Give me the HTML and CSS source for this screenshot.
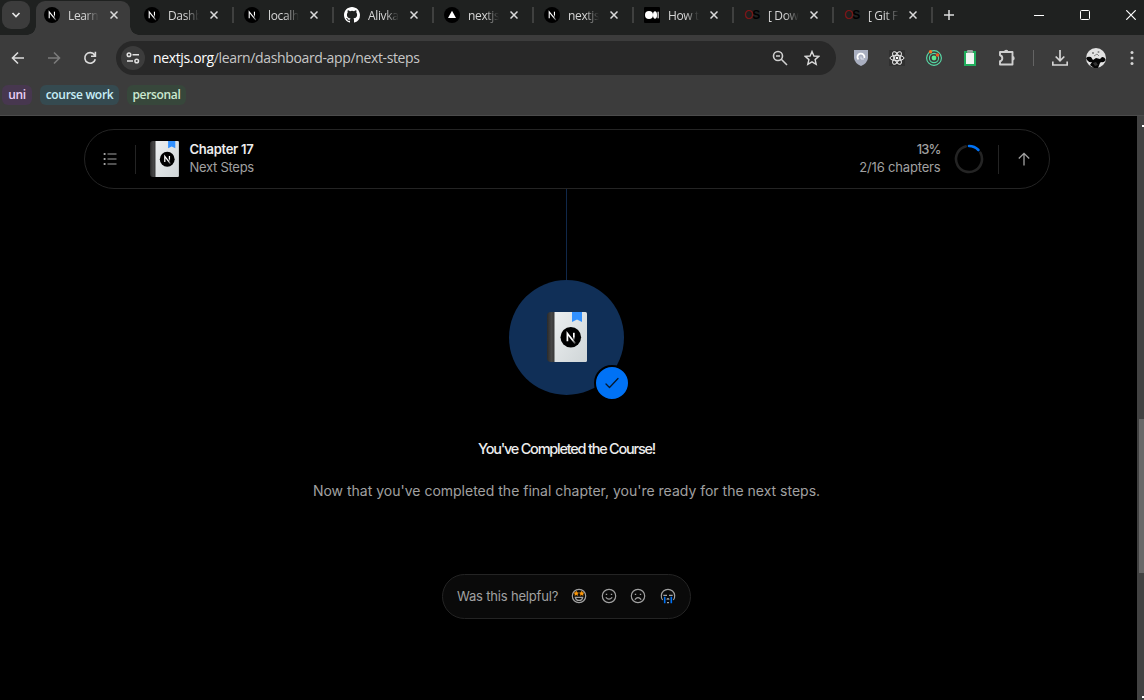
FILE: index.html
```html
<!DOCTYPE html>
<html lang="en">
<head>
<meta charset="utf-8">
<title>Next Steps</title>
<link rel="stylesheet" href="styles.css">
</head>
<body>
<svg class="defs" width="0" height="0">
  <defs>
    <linearGradient id="stem" x1="0" y1="0" x2="0" y2="1"><stop offset=".5" stop-color="#fff"/><stop offset="1" stop-color="#fff" stop-opacity="0"/></linearGradient>
    <linearGradient id="slash" x1="0" y1="0" x2="1" y2="1"><stop offset=".6" stop-color="#fff"/><stop offset="1" stop-color="#fff" stop-opacity=".2"/></linearGradient>
    <linearGradient id="paper" x1="0" y1="0" x2="1" y2="1"><stop offset="0" stop-color="#eceff0"/><stop offset="1" stop-color="#cfd5d7"/></linearGradient>
    <linearGradient id="spine" x1="0" y1="0" x2="1" y2="0"><stop offset="0" stop-color="#2a2a2a"/><stop offset=".5" stop-color="#464646"/><stop offset="1" stop-color="#303030"/></linearGradient>
    <symbol id="next" viewBox="0 0 16 16">
      <circle cx="8" cy="8" r="8" fill="#000"/>
      <path d="M5.2 11.2V4.9L11.9 13.2" fill="none" stroke="url(#slash)" stroke-width="1.1"/>
      <rect x="9.9" y="4.7" width="1.1" height="5.6" fill="url(#stem)"/>
    </symbol>
    <symbol id="close" viewBox="0 0 8 8"><path d="M.5.5l7 7M7.5.5l-7 7" fill="none" stroke="#dadada" stroke-width="1.5"/></symbol>
    <symbol id="github" viewBox="0 0 16 16"><path fill="#fff" d="M8 0C3.58 0 0 3.58 0 8c0 3.54 2.29 6.53 5.47 7.59.4.07.55-.17.55-.38 0-.19-.01-.82-.01-1.49-2.01.37-2.53-.49-2.69-.94-.09-.23-.48-.94-.82-1.13-.28-.15-.68-.52-.01-.53.63-.01 1.08.58 1.23.82.72 1.21 1.87.87 2.33.66.07-.52.28-.87.51-1.07-1.78-.2-3.64-.89-3.64-3.95 0-.87.31-1.59.82-2.15-.08-.2-.36-1.02.08-2.12 0 0 .67-.21 2.2.82a7.6 7.6 0 0 1 4 0c1.53-1.04 2.2-.82 2.2-.82.44 1.1.16 1.92.08 2.12.51.56.82 1.27.82 2.15 0 3.07-1.87 3.75-3.65 3.95.29.25.54.73.54 1.48 0 1.07-.01 1.93-.01 2.2 0 .21.15.46.55.38A8.01 8.01 0 0 0 16 8c0-4.42-3.58-8-8-8z"/></symbol>
    <symbol id="book" viewBox="0 0 40 50">
      <path d="M4 0H9V50H4Q0 50 0 46V4Q0 0 4 0Z" fill="url(#spine)"/>
      <path d="M7.5 0H38.500Q40 0 40 1.500V48.500Q40 50 38.500 50H7.500Z" fill="url(#paper)"/>
      <path d="M25 0H35V10L30 7.500L25 10Z" fill="#3291ff"/>
      <circle cx="23.800" cy="25.300" r="10.300" fill="#000"/>
      <path d="M20.400 29.200V21.400L28.300 31.600" fill="none" stroke="url(#slash)" stroke-width="1.700"/>
      <rect x="26" y="20.800" width="1.700" height="7.500" fill="url(#stem)"/>
    </symbol>
  </defs>
</svg>

<header class="tabstrip">
  <div class="tab-search"><svg width="10" height="6" viewBox="0 0 10 6"><path d="M1.500 1L5 4.500L8.500 1" fill="none" stroke="#e6e6e6" stroke-width="1.700"/></svg></div>
  <div class="tab active"><svg class="fav"><use href="#next"/></svg><span class="title">Learn</span><svg class="x"><use href="#close"/></svg></div>
  <div class="tab"><svg class="fav"><use href="#next"/></svg><span class="title">Dashb</span><svg class="x"><use href="#close"/></svg></div>
  <div class="tab sep"><svg class="fav"><use href="#next"/></svg><span class="title">localh</span><svg class="x"><use href="#close"/></svg></div>
  <div class="tab sep"><svg class="fav"><use href="#github"/></svg><span class="title">Alivka</span><svg class="x"><use href="#close"/></svg></div>
  <div class="tab sep"><svg class="fav" viewBox="0 0 16 16"><circle cx="8" cy="8" r="8"/><path d="M8 3.800L12 11H4Z" fill="#fff"/></svg><span class="title">nextjs</span><svg class="x"><use href="#close"/></svg></div>
  <div class="tab sep"><svg class="fav"><use href="#next"/></svg><span class="title">nextjs</span><svg class="x"><use href="#close"/></svg></div>
  <div class="tab sep"><svg class="fav" viewBox="0 0 16 16"><rect width="16" height="16" rx="1"/><circle cx="5" cy="8" r="4" fill="#fff"/><ellipse cx="11" cy="8" rx="2" ry="3.800" fill="#fff"/><rect x="13.500" y="4.700" width="1.300" height="6.600" fill="#ddd"/></svg><span class="title">How t</span><svg class="x"><use href="#close"/></svg></div>
  <div class="tab sep"><span class="fav os"><b>O</b>S</span><span class="title">[ Dow</span><svg class="x"><use href="#close"/></svg></div>
  <div class="tab sep last"><span class="fav os"><b>O</b>S</span><span class="title">[ Git F</span><svg class="x"><use href="#close"/></svg></div>
  <div class="newtab"><svg width="10" height="10" viewBox="0 0 10 10"><path d="M5 0V10M0 5H10" stroke="#dcdcdc" stroke-width="1.500"/></svg></div>
  <div class="window">
    <svg width="10" height="10"><path d="M0 5.500H10" stroke="#fff"/></svg>
    <svg width="10" height="10"><rect x=".5" y=".5" width="9" height="9" rx="1" fill="none" stroke="#fff"/></svg>
    <svg width="10" height="10"><path d="M.3.3L9.700 9.700M9.700.3L.3 9.700" stroke="#fff" stroke-width="1.200"/></svg>
  </div>
</header>

<div class="toolbar">
  <div class="arrows">
    <svg width="14" height="14" viewBox="0 0 14 14"><path d="M13 7H2M7 1.500L1.500 7L7 12.500" fill="none" stroke="#dcdcdc" stroke-width="1.600"/></svg>
    <svg width="14" height="14" viewBox="0 0 14 14"><path d="M1 7H12M7 1.500L12.500 7L7 12.500" fill="none" stroke="#7b7b7b" stroke-width="1.600"/></svg>
    <svg width="14" height="14" viewBox="0 0 14 14"><path d="M11.600 4A5.300 5.300 0 1 0 12.300 8.200M12.400.8V5.200H8" fill="none" stroke="#dcdcdc" stroke-width="1.600"/></svg>
  </div>
  <div class="omnibox">
    <div class="site"><svg width="14" height="12" viewBox="0 0 14 12" fill="none" stroke="#e3e3e3" stroke-width="1.500"><circle cx="3" cy="2.700" r="1.800"/><path d="M6.500 2.700H13M1 9H7"/><circle cx="10.700" cy="9" r="1.800"/></svg></div>
    <span class="url"><b>nextjs.org</b>/learn/dashboard-app/next-steps</span>
    <svg class="mag" width="16" height="16" viewBox="0 0 16 16" fill="none" stroke="#cfcfcf" stroke-width="1.600"><circle cx="6" cy="6" r="4.500"/><path d="M9.300 9.300L15 15M4 6H8"/></svg>
    <svg width="16" height="16" viewBox="0 0 16 16"><path d="M8 1.500L9.900 6L14.800 6.400L11.100 9.600L12.200 14.300L8 11.800L3.800 14.300L4.900 9.600L1.200 6.400L6.100 6Z" fill="none" stroke="#dadada" stroke-width="1.400"/></svg>
  </div>
  <div class="ext">
    <svg width="16" height="16" viewBox="0 0 16 16"><path d="M1 0H15V8Q14.500 13 8 16Q1.500 13 1 8Z" fill="#a9afc0"/><path d="M5.400 9.500A3.500 3.500 0 1 1 11.300 8" fill="none" stroke="#fff" stroke-width="1.800"/><path d="M8 6.500V9H11" fill="none" stroke="#dfe3ee"/></svg>
    <svg width="16" height="16" viewBox="0 0 16 16"><rect width="16" height="16" fill="#303030"/><g fill="none" stroke="#ededed" stroke-width="1"><ellipse cx="8" cy="8" rx="7" ry="2.700"/><ellipse cx="8" cy="8" rx="7" ry="2.700" transform="rotate(60 8 8)"/><ellipse cx="8" cy="8" rx="7" ry="2.700" transform="rotate(120 8 8)"/></g><circle cx="8" cy="8" r="1.300" fill="#fff"/></svg>
    <svg width="16" height="16" viewBox="0 0 16 16"><circle cx="8" cy="8" r="2.400" fill="#5dea91"/><circle cx="8" cy="8" r="4.600" fill="none" stroke="#50d6a0" stroke-width="1.100"/><circle cx="8" cy="8" r="7.400" fill="none" stroke="#59dda9" stroke-width="1.100"/><circle cx="4.500" cy="1.800" r="1.700" fill="#f47a28"/><circle cx="11.500" cy="5" r="1.700" fill="#ef5b24"/></svg>
    <svg width="16" height="16" viewBox="0 0 16 16"><rect x="2" y="1" width="12" height="15" fill="#20ad5c"/><rect x="4" y="3" width="8" height="11" fill="#f1f5f2"/><rect x="5" y="0" width="6" height="3" rx="1" fill="#9aa5a0"/></svg>
    <svg class="puzzle" width="18" height="18" viewBox="0 0 18 18"><path d="M2 3H14.500V15.500H2V12.300Q4.300 11.800 4.300 9.300T2 6.300Z" fill="none" stroke="#cfcfcf" stroke-width="1.900" stroke-linejoin="round"/><path d="M6 3A2.200 2.200 0 0 1 10.400 3ZM14.500 7A2.200 2.200 0 0 1 14.500 11.400Z" fill="#cfcfcf"/></svg>
    <i class="divider"></i>
    <svg width="16" height="16" viewBox="0 0 16 16"><path d="M8 0V10.500M3.700 6.500L8 10.800L12.300 6.500M.8 11.500V15H15.200V11.500" fill="none" stroke="#d5d5d5" stroke-width="1.700"/></svg>
    <svg class="avatar" width="20" height="20" viewBox="0 0 20 20"><circle cx="10" cy="10" r="10" fill="#e2e2e2"/><path d="M0 10Q2 8 5 9L7 12L10 10L14 11L16 9Q19 9 19.500 12Q18 15 15 14L14 15L12 20H8L4 17L6 14Q2 15 0 10Z" fill="#050505"/><path d="M7 15L10 14L12 17L9 18Z" fill="#333"/><circle cx="7" cy="5" r="1" fill="#777"/><circle cx="12.500" cy="4" r="1" fill="#888"/><path d="M8 8L11 6L13 8" fill="none" stroke="#888"/></svg>
    <svg width="4" height="16" viewBox="0 0 4 16" fill="#d5d5d5"><circle cx="2" cy="2.500" r="1.500"/><circle cx="2" cy="8" r="1.500"/><circle cx="2" cy="13.500" r="1.500"/></svg>
  </div>
</div>

<div class="bookmarks"><span class="chip uni">uni</span><span class="chip work">course work</span><span class="chip personal">personal</span></div>

<div class="view">
  <main class="page">
    <nav class="course">
      <svg class="list" width="14" height="14" viewBox="0 0 14 14" stroke="#a1a1a1"><path d="M4.500 2H13.500M4.500 7H13.500M4.500 12H13.500" stroke-width="1.200"/><path d="M.7 2H2.500M.7 7H2.500M.7 12H2.500" stroke-width="1.800"/></svg>
      <i class="rule"></i>
      <svg class="mini" width="29" height="36" viewBox="0 0 40 50"><use href="#book" width="40" height="50"/></svg>
      <div class="chapter"><strong>Chapter 17</strong><span>Next Steps</span></div>
      <div class="progress"><b>13%</b><span>2/16 chapters</span></div>
      <svg class="ring" width="30" height="30" viewBox="0 0 30 30" fill="none" stroke-width="2.600" stroke-linecap="round"><circle cx="15" cy="15" r="13" stroke="#242424" pathLength="100" stroke-dasharray="79 21" transform="rotate(-29 15 15)"/><path d="M15 2A13 13 0 0 1 24.400 6" stroke="#0072f5"/></svg>
      <i class="rule second"></i>
      <svg width="12" height="14" viewBox="0 0 12 14"><path d="M6 13.500V1.500M.8 6.500L6 1.300L11.200 6.500" fill="none" stroke="#a1a1a1" stroke-width="1.300"/></svg>
    </nav>
    <div class="line"></div>
    <div class="medal">
      <svg width="40" height="50"><use href="#book"/></svg>
      <span class="check"><svg width="14" height="12" viewBox="0 0 14 12"><path d="M1 7L4.500 10.500L13 1.500" fill="none" stroke="#06192e" stroke-width="1.300" stroke-linecap="round" stroke-linejoin="round"/></svg></span>
    </div>
    <h1>You've Completed the Course!</h1>
    <p class="lead">Now that you've completed the final chapter, you're ready for the next steps.</p>
    <div class="feedback">
      <span class="ask">Was this helpful?</span>
      <div class="faces">
        <svg viewBox="0 0 16 16"><circle cx="8" cy="8" r="6.700"/><path d="M4.300 9.300H11.700Q11.200 12.400 8 12.400T4.300 9.300Z"/><path d="M5.300 3L6 4.600L7.600 4.800L6.500 6L6.800 7.500L5.300 6.800L3.800 7.500L4 6L3 4.800L4.600 4.600ZM10.700 3L11.400 4.600L13 4.800L11.900 6L12.200 7.500L10.700 6.800L9.200 7.500L9.500 6L8.400 4.800L10 4.600Z" fill="#ff990a" stroke="#ff990a" stroke-width=".4"/></svg>
        <svg viewBox="0 0 16 16"><circle cx="8" cy="8" r="6.700"/><path d="M4.800 9.300Q8 13 11.200 9.300"/><path d="M4.800 6.300H6.200M9.800 6.300H11.200"/></svg>
        <svg viewBox="0 0 16 16"><circle cx="8" cy="8" r="6.700"/><path d="M4.800 11.700Q8 7.500 11.200 11.700"/><path d="M4.800 6.300H6.200M9.800 6.300H11.200"/></svg>
        <svg viewBox="0 0 16 16"><path d="M2.600 12A6.700 6.700 0 1 1 13.400 12M3.300 7.300H7M9 7.300H12.700M6.800 11.600Q8 9.800 9.200 11.600M7 14.700H9"/><path d="M4.700 8.800V15.300M11.300 8.800V15.300" stroke="#0072f5" stroke-width="1.600"/></svg>
      </div>
    </div>
  </main>
  <aside class="scroll"><i class="up"></i><i class="thumb"></i><i class="down"></i></aside>
</div>
</body>
</html>
```
FILE: styles.css
```css
* { box-sizing: border-box; }
body { margin: 0; width: 1144px; height: 700px; overflow: hidden; background: #000; font-family: "Open Sans", "Noto Sans", sans-serif; }
svg { display: block; flex: none; }
.defs { position: absolute; }

.tabstrip { display: flex; height: 35px; background: #1f2120; }
.tab-search { display: grid; place-items: center; width: 28px; height: 28px; margin: 1px 6px 0 2px; border-radius: 9px; background: #3c3c3c; flex: none; }
.tab { position: relative; display: flex; align-items: center; width: 100px; height: 30px; padding-left: 8px; flex: none; color: #d6d6d6; }
.tab.last { width: 99px; }
.fav { width: 16px; height: 16px; flex: none; }
.title { width: 31px; margin: 1px 0 0 8px; white-space: nowrap; font-size: 12px; line-height: 16px; letter-spacing: -.35px; -webkit-mask-image: linear-gradient(90deg, #000 55%, transparent); mask-image: linear-gradient(90deg, #000 55%, transparent); flex: none; }
.x { width: 8px; height: 8px; margin-left: 11px; }
.last .x { margin-left: 10px; }
.sep::before { content: ""; position: absolute; left: -4px; top: 7px; width: 2px; height: 16px; background: #3f403f; }
.active::before { content: ""; position: absolute; left: 0; top: 1px; width: 94px; height: 34px; border-radius: 9px 9px 0 0; background: #3c3c3c; }
.active::after { content: ""; position: absolute; left: -9px; top: 26px; width: 112px; height: 9px; background: radial-gradient(circle at 0 0, transparent 8.500px, #3c3c3c 9px) left / 9px 9px no-repeat, radial-gradient(circle at 100% 0, transparent 8.500px, #3c3c3c 9px) right / 9px 9px no-repeat; }
.active > * { position: relative; z-index: 1; }
.os { font: bold 12px/16px "Liberation Sans", sans-serif; letter-spacing: -1.200px; color: #000; }
.os b { color: #7f1517; font-weight: normal; }
.newtab { position: relative; padding: 10px 0 0 9px; width: 20px; }
.newtab::before { content: ""; position: absolute; left: -4px; top: 7px; width: 2px; height: 16px; background: #3f403f; }
.window { display: flex; gap: 36px; margin-left: auto; padding: 10px 8px 0 0; }

.toolbar { display: flex; align-items: center; height: 46px; background: #3c3c3c; }
.arrows { display: flex; gap: 22px; padding-left: 11px; width: 116px; }
.omnibox { display: flex; align-items: center; width: 720px; height: 34px; padding: 0 16px 0 5px; border-radius: 17px; background: #282828; flex: none; }
.site { display: grid; place-items: center; width: 24px; height: 24px; border-radius: 50%; background: #3c3c3c; }
.url { margin: -1px 0 0 8px; font-size: 14px; letter-spacing: -.36px; color: #c7c7c7; white-space: nowrap; }
.url b { font-weight: normal; color: #fff; }
.mag { margin: 0 16px 0 auto; }
.ext { display: flex; align-items: center; padding-left: 17px; flex: 1; }
.ext > svg { margin-right: 20.350px; }
.ext > .puzzle { margin-right: 16.500px; }
.divider { width: 1px; height: 16px; margin-right: 18.500px; background: #646464; }
.ext > .avatar { margin: 0 24px 0 -2.500px; }
.ext > svg:last-child { margin: 0; }

.bookmarks { display: flex; gap: 8px; height: 35px; padding: 4px 2px; background: #3c3c3c; border-bottom: 1px solid #4b4b4b; }
.chip { display: flex; justify-content: center; height: 20px; border-radius: 6px; font-size: 12px; line-height: 20px; font-weight: 600; letter-spacing: -.32px; white-space: nowrap; }
.uni { width: 30px; background: #47374f; color: #e9d0f7; }
.work { width: 79px; background: #354a50; color: #c8eef7; }
.personal { width: 59px; background: #37473b; color: #cbe9d0; }

.view { display: flex; height: 584px; }
.page { display: flex; flex-direction: column; align-items: center; width: 1137px; padding-right: 4px; font-family: Inter, sans-serif; color: #a1a1a1; }
.course { display: flex; align-items: center; width: 966px; height: 60px; margin: 13px 0 0 0; padding: 0 19px 0 18px; border: 1px solid #242424; border-radius: 30px; flex: none; }
.rule { width: 1px; height: 29px; margin: 0 14px 0 18px; background: #242424; }
.rule.second { margin: 0 19px 0 14px; }
.chapter { display: flex; flex-direction: column; margin: -3px 0 0 11px; font-size: 13px; line-height: 18px; letter-spacing: -.28px; white-space: nowrap; }
.chapter strong { color: #ededed; font-weight: 600; }
.progress { display: flex; flex-direction: column; align-items: flex-end; margin: -3px 13px 0 auto; font-size: 13px; line-height: 18px; letter-spacing: -.17px; }
.progress b { font-weight: 500; letter-spacing: -.9px; }
.line { width: 1px; height: 91px; background: #10284a; flex: none; }
.medal { position: relative; display: grid; place-items: center; width: 115px; height: 115px; padding: 0 0 2px 1px; border-radius: 50%; background: #102f57; flex: none; }
.check { position: absolute; left: 84.500px; top: 84.500px; display: grid; place-items: center; width: 36px; height: 36px; border: 2px solid #000; border-radius: 50%; background: #0072f5; }
h1 { margin: 44px 0 0; font-size: 14.500px; line-height: 20px; font-weight: 500; letter-spacing: -1.230px; color: #ededed; white-space: nowrap; }
.lead { margin: 22px 0 0; font-size: 14px; line-height: 20px; white-space: nowrap; }
.feedback { display: flex; align-items: center; width: 249px; height: 45px; margin-top: 73px; padding: 0 14px 2px; border: 1px solid #242424; border-radius: 23px; background: #0a0a0a; font-size: 13px; }
.ask { white-space: nowrap; letter-spacing: -.18px; }
.faces { display: flex; gap: 13.700px; margin: 1px 0 0 auto; }
.faces svg { width: 16px; height: 16px; fill: none; stroke: #a1a1a1; stroke-width: 1.200; }
.scroll { position: relative; width: 7px; background: #424242; }
.thumb { position: absolute; left: 2px; top: 303px; width: 5px; height: 154px; background: #686868; }
.up, .down { position: absolute; left: 5px; width: 2px; height: 2px; background: #fff; }
.up { top: 9px; }
.down { top: 580px; }
```
